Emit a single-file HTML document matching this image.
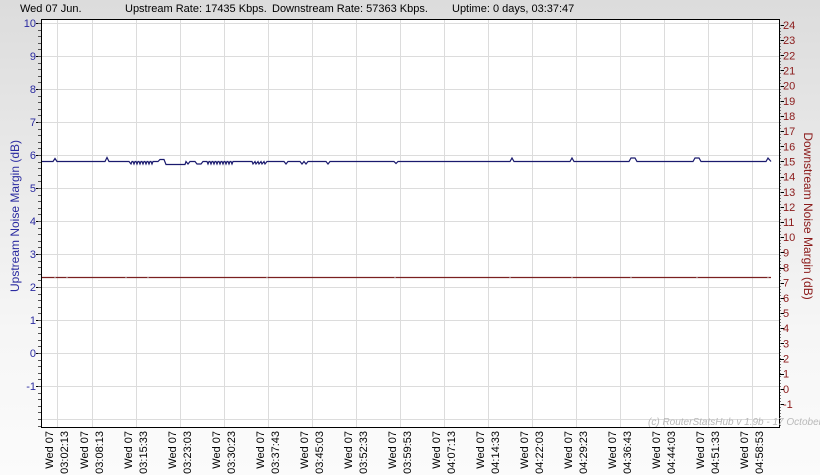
<!DOCTYPE html>
<html><head><meta charset="utf-8"><style>
html,body{margin:0;padding:0;width:820px;height:475px;overflow:hidden;background:linear-gradient(#dcdcdc,#f6f6f6 70%,#fbfbfb);}
svg{display:block;font-family:"Liberation Sans",sans-serif;}
</style></head><body>
<svg width="820" height="475" xmlns="http://www.w3.org/2000/svg">
<g font-size="11" fill="#000">
<text x="20" y="12">Wed 07 Jun.</text>
<text x="125" y="12">Upstream Rate: 17435 Kbps.</text>
<text x="272" y="12">Downstream Rate: 57363 Kbps.</text>
<text x="452" y="12">Uptime: 0 days, 03:37:47</text>
</g>
<rect x="41" y="19" width="738" height="408" fill="#fff"/>
<g stroke="#dcdcdc" stroke-width="1" id="grid"></g>
<script>
(function(){
var ns="http://www.w3.org/2000/svg",svg=document.querySelector('svg'),g=document.getElementById('grid');
function el(n,a,p){var e=document.createElementNS(ns,n);for(var k in a)e.setAttribute(k,a[k]);(p||svg).appendChild(e);return e;}
var xs=[57];for(var i=0;i<16;i++)xs.push(92+44*i);
xs.forEach(function(x){el('line',{x1:x+.5,y1:19,x2:x+.5,y2:427},g);});
for(var v=10;v>=-2;v--){var y=353-33*v;if(y>19&&y<427)el('line',{x1:41,y1:y+.5,x2:779,y2:y+.5},g);}
var times=["03:02:13","03:08:13","03:15:33","03:23:03","03:30:23","03:37:43","03:45:03","03:52:33","03:59:53","04:07:13","04:14:33","04:22:03","04:29:23","04:36:43","04:44:03","04:51:33","04:58:53"];
xs.forEach(function(x,i){
 var t=el('text',{transform:'translate('+(x-4)+',431) rotate(-90)','text-anchor':'end','font-size':'11',fill:'#000'});t.textContent='Wed 07';
 var t2=el('text',{transform:'translate('+(x+11)+',431) rotate(-90)','text-anchor':'end','font-size':'11',fill:'#000'});t2.textContent=times[i];
});
// left axis
for(var v=10;v>=-1;v--){var y=353-33*v;
 var t=el('text',{x:36,y:y+4,'text-anchor':'end','font-size':'11',fill:'#2a2aa0'});t.textContent=v;
 el('line',{x1:36,y1:y+.5,x2:41,y2:y+.5,stroke:'#000'});}
for(var k=0;k<62;k++){var y=23+k*6.6;if(y<427)el('line',{x1:38,y1:Math.round(y)+.5,x2:41,y2:Math.round(y)+.5,stroke:'#555'});}
// right axis
for(var v=24;v>=-1;v--){var y=25+(24-v)*15.16;
 var t=el('text',{x:783,y:y+4,'font-size':'11',fill:'#8b1a1a'});t.textContent=v;
 el('line',{x1:779,y1:Math.round(y)+.5,x2:784,y2:Math.round(y)+.5,stroke:'#000'});}
for(var k=0;k<135;k++){var y=25+k*3.03;if(y<427)el('line',{x1:779,y1:Math.round(y)+.5,x2:781,y2:Math.round(y)+.5,stroke:'#777'});}
// upstream line
var d='M41 161.5 L53 161.5 L55 158.5 L57 161.5 L105 161.5 L107 157.5 L109 161.5 L129 161.5';
for(var x=130;x<152;x+=3)d+=' L'+(x+1)+' 164 L'+(x+2)+' 161.5 L'+(x+3)+' 161.5';
d+=' L158 161.5 L160 159.5 L164 159.5 L166 164.5 L185 164.5 L186 161.5 L188 164 L190 161.5 L195 161.5 L197 164 L201 164 L203 161.5 L206 161.5';
for(var x=206;x<233;x+=3)d+=' L'+(x+1)+' 161.5 L'+(x+2)+' 164 L'+(x+3)+' 161.5';
d+=' L252 161.5';for(var x=252;x<265;x+=3)d+=' L'+(x+1)+' 164 L'+(x+3)+' 161.5';
d+=' L284 161.5 L286 164 L288 161.5 L300 161.5 L302 164 L304 161.5 L306 164 L308 161.5 L326 161.5 L328 164 L330 161.5 L394 161.5 L396 163.5 L398 161.5 L510 161.5 L512 158 L514 161.5 L570 161.5 L572 158 L574 161.5 L629 161.5 L631 158 L635 158 L637 161.5 L693 161.5 L695 158 L699 158 L701 161.5 L766 161.5 L768 158 L771 161.5';
el('path',{d:d,fill:'none',stroke:'#1a1a6e','stroke-width':'1.2'});
var d2='M41 277.5 L771 277.5';
el('path',{d:d2,fill:'none',stroke:'#7a2020','stroke-width':'1.3'});
[55,67,126,148,267,395,510,572,631,697,768].forEach(function(x){el('line',{x1:x,y1:276.5,x2:x,y2:278.5,stroke:'#ccc'});});
el('rect',{x:41.5,y:19.5,width:738,height:408,fill:'none',stroke:'#000'});
var w=el('text',{x:648,y:425,'font-size':'10','font-style':'italic',fill:'#b8b8b8'});w.textContent='(c) RouterStatsHub v 1.9b - 17 October 2';
var a=el('text',{transform:'translate(19,216) rotate(-90)','text-anchor':'middle','font-size':'12',fill:'#2a2aa0'});a.textContent='Upstream Noise Margin (dB)';
var b=el('text',{transform:'translate(804,216) rotate(90)','text-anchor':'middle','font-size':'12',fill:'#8b1a1a'});b.textContent='Downstream Noise Margin (dB)';
})();
</script>
</svg>
</body></html>
